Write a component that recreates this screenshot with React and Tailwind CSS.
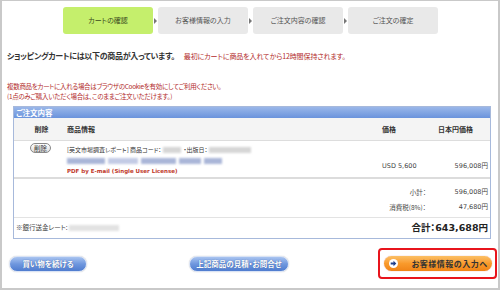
import React from "react";

const jp = "font-['Noto_Sans_CJK_JP','Noto_Sans',sans-serif] [font-feature-settings:'palt']";
const num = "font-['DejaVu_Sans','Noto_Sans_CJK_JP',sans-serif]";

function Step({ label, active }) {
  return (
    <div
      className={`w-[90px] h-[27px] rounded-[3px] flex items-center justify-center text-[7px] ${
        active ? "bg-[#c5ef6c] text-[#3a4a20]" : "bg-[#e9e9e9] text-[#555]"
      }`}
    >
      {label}
    </div>
  );
}

function Arrow() {
  return (
    <div className="w-[5px] flex items-center justify-center">
      <div className="w-0 h-0 border-y-[3px] border-y-transparent border-l-[3px] border-l-[#777]" />
    </div>
  );
}

function Blur({ w, color = "bg-[#d6d6d6]" }) {
  return <span className={`inline-block h-[6px] ${w} ${color} blur-[1px] align-middle`} />;
}

function BlueButton({ children, className = "" }) {
  return (
    <div
      className={`h-[16px] rounded-full bg-gradient-to-b from-[#a9c4f0] via-[#6f97de] to-[#4f7ccf] border border-[#d9e3f5] shadow-[0_0_1px_#aaa] flex items-center justify-center text-white text-[7.5px] font-bold [text-shadow:0_0_1px_#2c4f90] ${className}`}
    >
      {children}
    </div>
  );
}

export default function App() {
  return (
    <div className={`${jp} w-[500px] h-[290px] bg-white border-t border-l-2 border-r-2 border-b-2 border-[#c9c9c9] overflow-hidden`}>
      <div className="flex pt-[6px] pl-[61px]">
        <Step label="カートの確認" active />
        <Arrow />
        <Step label="お客様情報の入力" />
        <Arrow />
        <Step label="ご注文内容の確認" />
        <Arrow />
        <Step label="ご注文の確定" />
      </div>

      <div className="flex items-center mt-[15px] pl-[5px] h-[14px]">
        <span className="text-[8px] text-[#333] font-bold tracking-[-0.3px]">
          ショッピングカートには以下の商品が入っています。
        </span>
        <span className="ml-[9px] text-[7px] text-[#b22b2b] tracking-[-0.1px]">
          最初にカートに商品を入れてから12時間保持されます。
        </span>
      </div>

      <div className="mt-[18px] pl-[5px] text-[6.5px] leading-[10px] text-[#b22b2b] tracking-[-0.3px]">
        <div>複数商品をカートに入れる場合はブラウザのCookieを有効にしてご利用ください。</div>
        <div>(1点のみご購入いただく場合は、このままご注文いただけます。)</div>
      </div>

      <div className="mt-[5px] ml-[11px] w-[478px] border border-[#a7b9db]">
        <div className="h-[11px] bg-gradient-to-b from-[#9ab7e9] to-[#6a93dc] text-white text-[7.5px] font-bold leading-[11px] pl-[2px]">
          ご注文内容
        </div>
        <div className="h-[23px] bg-[#f4f4f4] flex items-center text-[7px] font-bold text-[#333] border-b border-[#ddd]">
          <div className="w-[53px] text-center pl-[2px]">削除</div>
          <div className="flex-1">商品情報</div>
          <div className="w-[56px]">価格</div>
          <div className="w-[52px]">日本円価格</div>
        </div>
        <div className="h-[38px] flex text-[6px] text-[#333] border-b-2 border-[#dcdcdc]">
          <div className="w-[53px] flex justify-center pt-[2px]">
            <div className="h-[10px] px-[3px] rounded-full border border-[#888] bg-gradient-to-b from-white to-[#ddd] text-[6.5px] leading-[8px] flex items-center">
              削除
            </div>
          </div>
          <div className="flex-1 pt-[3px] leading-[11px]">
            <div className="flex items-center gap-[2px]">
              <span>[英文市場調査レポート] 商品コード：</span>
              <Blur w="w-[18px]" />
              <span>・出版日：</span>
              <Blur w="w-[42px]" />
            </div>
            <div className="flex items-center gap-[3px] h-[11px]">
              <Blur w="w-[38px]" color="bg-[#aab6d8]" />
              <Blur w="w-[30px]" color="bg-[#c3cbe5]" />
              <Blur w="w-[35px]" color="bg-[#aab6d8]" />
              <Blur w="w-[22px]" color="bg-[#aab6d8]" />
              <Blur w="w-[18px]" color="bg-[#aab6d8]" />
            </div>
            <div className="text-[#c0392b] font-bold font-['DejaVu_Sans','Noto_Sans_CJK_JP',sans-serif] text-[5.5px]">
              PDF by E-mail (Single User License)
            </div>
          </div>
          <div className={`w-[56px] flex items-end pb-[5px] ${num} text-[6.5px] text-[#444]`}>
            USD 5,600
          </div>
          <div className={`w-[52px] flex items-end justify-end pb-[5px] pr-[2px] ${num} text-[6.5px] text-[#444]`}>
            596,008円
          </div>
        </div>
        <div className="h-[38px] flex flex-col justify-end items-end pr-[2px] pb-[2px] text-[6.5px] text-[#444] leading-[15px]">
          <div className="flex">
            <span className="w-[60px] text-right">小計：</span>
            <span className={`w-[62px] text-right ${num}`}>596,008円</span>
          </div>
          <div className="flex">
            <span className="w-[60px] text-right">消費税(8%)：</span>
            <span className={`w-[62px] text-right ${num}`}>47,680円</span>
          </div>
        </div>
        <div className="h-[21px] border-t border-[#e3e3e3] flex items-center justify-between px-[2px] pr-[2px]">
          <div className="flex items-center gap-[2px] text-[6.5px] text-[#444]">
            <span>※銀行送金レート:</span>
            <Blur w="w-[50px]" color="bg-[#e2e2e2]" />
          </div>
          <div className={`text-[9.5px] font-bold text-[#222] ${num}`}>合計：643,688円</div>
        </div>
      </div>

      <div className="flex items-center mt-[9px] pl-[7px] pr-[1px]">
        <BlueButton className="w-[78px]">買い物を続ける</BlueButton>
        <BlueButton className="w-[100px] ml-[102px]">上記商品の見積・お問合せ</BlueButton>
        <div className="ml-auto w-[119px] h-[31px] border-2 border-[#e8141c] rounded-[4px] flex items-center justify-center">
          <div className="w-[108px] h-[15px] rounded-full bg-gradient-to-b from-[#fbc064] via-[#f99a2b] to-[#f08416] flex items-center pl-[5px] shadow-[0_0_1px_#d77]">
            <div className="w-[9px] h-[9px] rounded-full bg-white flex items-center justify-center">
              <svg width="7" height="7" viewBox="0 0 10 10">
                <path d="M1 3.5h4V1l4 4-4 4V6.5H1z" fill="#1f3e8a" />
              </svg>
            </div>
            <span className="ml-[14px] text-[8px] font-bold text-[#333] tracking-[0.5px]">お客様情報の入力へ</span>
          </div>
        </div>
      </div>
    </div>
  );
}
